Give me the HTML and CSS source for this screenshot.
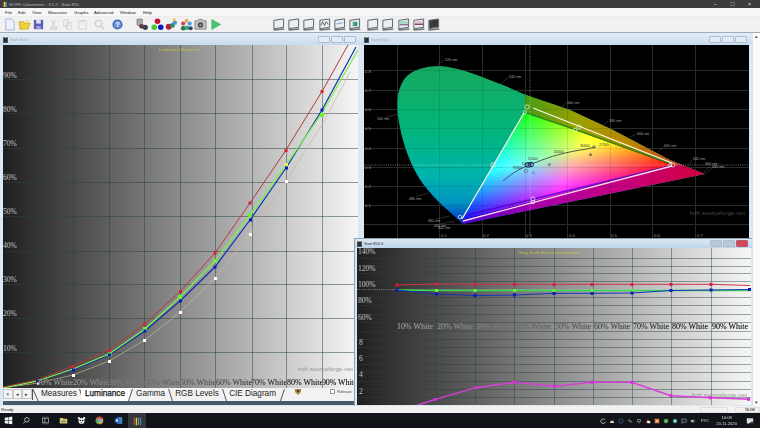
FILE: index.html
```html
<!DOCTYPE html>
<html lang="en">
<head>
<meta charset="utf-8">
<title>HCFR Colorimeter</title>
<link rel="stylesheet" href="styles.css">
</head>
<body>
<svg class="defs" width="0" height="0" aria-hidden="true">
  <defs>
    <linearGradient id="plotbg" x1="0" x2="1" y1="0" y2="0"><stop offset="0" stop-color="#1f1f1f"/><stop offset=".5" stop-color="#8c8c8c"/><stop offset="1" stop-color="#f6f6f6"/></linearGradient>
    <symbol id="mon" viewBox="0 0 14 14">
      <path d="M2 2.5 12.5 1v9L2 11.5z" fill="#e9eef2" stroke="#555b60" stroke-width="1"/>
      <path d="M1 12.2 13 11l.5 1.6-11.5 1z" fill="#70767c"/>
    </symbol>
  </defs>
</svg>
<div class="app">
  <header class="titlebar">
    <span class="appicon"></span>
    <span class="apptitle">HCFR Colorimeter - 3.5.2 - Sam 850</span>
    <span class="winctl"><span>&#8722;</span><span>&#9633;</span><span>&#215;</span></span>
  </header>
  <nav class="menubar">
    <span>File</span><span>Edit</span><span>View</span><span>Measures</span><span>Graphs</span><span>Advanced</span><span>Window</span><span>Help</span>
  </nav>
  <div class="toolbar">
    <div class="tgroup g1">
      <svg viewBox="0 0 14 14"><path d="M3 1h6l3 3v9H3z" fill="#eef3fb" stroke="#9fb4d6"/></svg>
      <svg viewBox="0 0 14 14"><path d="M1 4h5l1 1.500h6L11 12H2z" fill="#f2cf3c" stroke="#b99a20" stroke-width=".6"/><circle cx="10" cy="3.500" r="1.500" fill="#f6e58a"/></svg>
      <svg viewBox="0 0 14 14"><path d="M2 2h10v10H2z" fill="#5a5fb4"/><path d="M4.500 2h5v4h-5z" fill="#dfe2f5"/><path d="M4.500 8.500h5V12h-5z" fill="#9ea2dc"/></svg>
      <svg viewBox="0 0 14 14"><path d="M5 2l3 7M9 2 6 9" stroke="#c8c8c8" fill="none"/><circle cx="5" cy="11" r="1.500" fill="none" stroke="#c8c8c8"/><circle cx="9" cy="11" r="1.500" fill="none" stroke="#c8c8c8"/></svg>
      <svg viewBox="0 0 14 14"><path d="M3 2h5v7H3zM6 5h5v7H6z" fill="#f2f2f2" stroke="#d2d2d2"/></svg>
      <svg viewBox="0 0 14 14"><path d="M3 3h8v9H3z" fill="#f0f0f0" stroke="#d4d4d4"/><path d="M5 2h4v2H5z" fill="#d6d6d6"/></svg>
      <svg class="wide" viewBox="0 0 14 14"><circle cx="6" cy="6" r="3.500" fill="none" stroke="#cfcfcf" stroke-width="1.500"/><path d="M9 9l3 3" stroke="#cfcfcf" stroke-width="1.500"/></svg>
      <svg class="wide" viewBox="0 0 14 14"><circle cx="7" cy="7" r="5.500" fill="#4a72bf"/><circle cx="7" cy="7" r="3.600" fill="#6f95d8"/><text x="7" y="10" class="helpq">?</text></svg>
    </div>
    <div class="tgroup g2">
      <svg viewBox="0 0 14 14"><rect x="1" y="1" width="6" height="7" rx="1" fill="#a9a9a9" stroke="#666" stroke-width=".6"/><circle cx="6" cy="9" r="2.600" fill="#5b3a4a"/><circle cx="10" cy="10" r="2.800" fill="#3d3d58"/></svg>
      <svg viewBox="0 0 14 14"><circle cx="7" cy="3.500" r="3" fill="#c8102e"/><circle cx="3.500" cy="10" r="3" fill="#3ccf2e"/><circle cx="10.500" cy="10" r="3" fill="#0a18c0"/></svg>
      <svg viewBox="0 0 14 14"><circle cx="4" cy="9.500" r="3.200" fill="#b0203c"/><circle cx="8" cy="8" r="2.600" fill="#2c8f5c"/><circle cx="10.500" cy="5" r="2.400" fill="#4f8fe0"/><circle cx="10" cy="2" r="1.600" fill="#f0c040"/></svg>
      <svg viewBox="0 0 14 14"><circle cx="7" cy="3" r="2" fill="#f0a040"/><circle cx="3.500" cy="6" r="2.200" fill="#c84060"/><circle cx="10.500" cy="6" r="2.200" fill="#40a0e0"/><circle cx="3.500" cy="11" r="2.500" fill="#2f6f50"/><circle cx="7.500" cy="10.500" r="2.500" fill="#2fae6f"/><circle cx="11.500" cy="11" r="2.200" fill="#30406f"/></svg>
      <svg viewBox="0 0 14 14"><path d="M1 3h3l1-1.500h4L10 3h3v9H1z" fill="#c2c2c2" stroke="#666" stroke-width=".7"/><circle cx="7" cy="7.500" r="2.800" fill="#45454c"/><circle cx="7" cy="7.500" r="1.300" fill="#9a9aa4"/></svg>
      <svg viewBox="0 0 14 14"><path d="M3 1.500 12.500 7 3 12.500z" fill="#46c46e" stroke="#2d9f55" stroke-width=".5"/></svg>
    </div>
    <div class="tgroup g3">
      <svg><use href="#mon"/></svg>
      <svg><use href="#mon"/></svg>
      <svg><use href="#mon"/></svg>
      <svg viewBox="0 0 14 14"><use href="#mon" width="14" height="14"/><path d="M3 8 5 4l2 4 2-4 2 3" fill="none" stroke="#333" stroke-width=".8"/></svg>
      <svg viewBox="0 0 14 14"><use href="#mon" width="14" height="14"/><path d="M3.500 6.500 11 5" stroke="#9bb7d8" stroke-width="1.500"/></svg>
      <svg viewBox="0 0 14 14"><use href="#mon" width="14" height="14"/><path d="M5 4h5v5H5z" fill="#56b070"/><path d="M7 5h3v3H7z" fill="#4c78c8"/></svg>
      <svg><use href="#mon"/></svg>
      <svg><use href="#mon"/></svg>
      <svg viewBox="0 0 14 14"><use href="#mon" width="14" height="14"/><path d="M3 3h9v3.500H3z" fill="#a8dcc0"/><path d="M3 6.500h9v1.500H3z" fill="#8a6f92"/></svg>
      <svg viewBox="0 0 14 14"><use href="#mon" width="14" height="14"/><path d="M3 3h9v3H3z" fill="#e4c6d8"/><path d="M3 6h9v1.500H3z" fill="#80405f"/></svg>
      <svg viewBox="0 0 14 14"><use href="#mon" width="14" height="14"/><path d="M2.500 2.800 12 1.500v8L2.500 11z" fill="#3a3a3c"/></svg>
    </div>
  </div>

  <main class="mdi">
    <section class="win win1">
      <div class="wintitle">
        <span class="winicon"></span><span class="wintext">Sam 850:1</span>
        <span class="winbtns"><i></i><i></i><i></i></span>
      </div>
      <svg class="plot" viewBox="3 45 355 343">
        <rect x="3" y="45" width="355" height="343" fill="url(#plotbg)"/>
        <path class="grid" d="M37.500 45V388M73.500 45V388M109.500 45V388M144.500 45V388M180.500 45V388M215.500 45V388M252.500 45V388M286.500 45V388M322.500 45V388M3 79.500H358M3 113.500H358M3 148.500H358M3 182.500H358M3 216.500H358M3 251.500H358M3 284.500H358M3 318.500H358M3 352.500H358"/>
        <text class="title-y" x="179" y="51">Luminance Response</text>
        <g class="axis">
          <text x="3" y="78">90%</text><text x="3" y="112">80%</text><text x="3" y="146">70%</text><text x="3" y="180">60%</text><text x="3" y="214">50%</text><text x="3" y="248">40%</text><text x="3" y="282">30%</text><text x="3" y="316">20%</text><text x="3" y="351">10%</text>
        </g>
        <text class="wm" x="353" y="371" text-anchor="end">hcfr.sourceforge.net</text>
        <polyline class="ln-w" points="3,388 38,383 73,375 109,361 145,340 180,312 215,278 250,234 286,181 322,125 350,72"/>
        <polyline class="ln-b" points="3,388 37,381 73,370 109,355 145,331 180,301 215,267 250,220 286,168 322,110 356,47"/>
        <polyline class="ln-g" points="3,388 37,381 73,369 109,354 145,329 180,297 215,261 250,215 286,165 322,113 358,50"/>
        <polyline class="ln-r" points="3,387 37,380 73,366 109,350 145,324 180,291.500 215,253 250,203 286,150 322,91.500 348,45"/>
        <g class="pt-w"><rect x="37" y="382" width="3" height="3"/><rect x="72" y="374" width="3" height="3"/><rect x="108" y="360" width="3" height="3"/><rect x="143" y="339" width="3" height="3"/><rect x="179" y="311" width="3" height="3"/><rect x="214" y="277" width="3" height="3"/><rect x="249" y="233" width="3" height="3"/><rect x="285" y="180" width="3" height="3"/></g>
        <g class="pt-r"><rect x="71" y="365" width="3" height="3"/><rect x="108" y="349" width="3" height="3"/><rect x="143" y="322.500" width="3" height="3"/><rect x="179" y="290" width="3" height="3"/><rect x="213.500" y="251.500" width="3" height="3"/><rect x="248.500" y="201.500" width="3" height="3"/><rect x="284.500" y="149" width="3" height="3"/><rect x="320.500" y="90" width="3" height="3"/></g>
        <g class="pt-g"><rect x="107.500" y="352.500" width="4" height="4"/><rect x="143" y="327" width="4" height="4"/><rect x="178" y="295" width="4" height="4"/><rect x="213" y="259" width="4" height="4"/><rect x="248" y="213" width="4" height="4"/><rect x="320" y="113" width="4" height="4"/></g>
        <rect class="pt-y" x="284.500" y="163" width="3.500" height="3.500"/>
        <g class="pt-b"><rect x="36" y="379.500" width="3" height="3"/><rect x="72" y="368.500" width="3" height="3"/><rect x="108" y="353.500" width="3" height="3"/><rect x="143.500" y="329.500" width="3" height="3"/><rect x="179" y="299.500" width="3" height="3"/><rect x="213.500" y="265.500" width="3" height="3"/><rect x="249" y="218.500" width="3" height="3"/><rect x="285" y="166.500" width="3" height="3"/><rect x="320.500" y="108.500" width="3" height="3"/></g>
        <g class="xor">
          <text x="37" y="385">10% White</text><text x="73" y="385">20% White</text><text x="109" y="385">30% White</text><text x="145" y="385">40% White</text><text x="180" y="385">50% White</text><text x="216" y="385">60% White</text><text x="251" y="385">70% White</text><text x="287" y="385">80% White</text><text x="322" y="385" textLength="35">90% White</text>
        </g>
      </svg>
      <div class="tabstrip">
        <div class="tabnav"><span>&#215;</span><span>&#9666;</span><span>&#9656;</span></div>
        <div class="tab first slash-back">Measures</div>
        <div class="tab current slash-fwd">Luminance</div>
        <div class="tab gamma slash-back">Gamma</div>
        <div class="tab rgb slash-back">RGB Levels</div>
        <div class="tab cie slash-fwd">CIE Diagram</div>
        <svg class="tabbadge" viewBox="0 0 6 6"><path d="M0 0h6v3L3 6 0 3z" fill="#a5833a"/><path d="M2 1h2v2H2z" fill="#50401c"/></svg>
        <label class="release"><span class="check"></span>Release</label>
      </div>
      <div class="winstrip"></div>
    </section>

    <section class="win win2">
      <div class="wintitle">
        <span class="winicon"></span><span class="wintext">Sam 850:2</span>
        <span class="winbtns"><i></i><i></i><i></i></span>
      </div>
      <svg class="plot" viewBox="364 45 385 194">
        <defs>
          <clipPath id="shoe"><path d="M461 222C445 208 430 195 419 178 408 160 401 138 398 116 396 100 398 88 405 78 412 70 425 66 440 66 458 67 480 76 503 85L526 95 570 110 613 130 670 160 705 174 463 224Z"/></clipPath>
          <linearGradient id="leftfill" x1="0" x2="0" y1="66" y2="222" gradientUnits="userSpaceOnUse"><stop offset="0" stop-color="#18a860"/><stop offset=".35" stop-color="#04b474"/><stop offset=".55" stop-color="#00b490"/><stop offset=".7" stop-color="#00b4ac"/><stop offset=".87" stop-color="#0096c0"/><stop offset="1" stop-color="#0038cc"/></linearGradient>
          <linearGradient id="topfill" x1="520" x2="680" y1="0" y2="0" gradientUnits="userSpaceOnUse"><stop offset="0" stop-color="#3f9a18"/><stop offset=".35" stop-color="#98a000"/><stop offset=".7" stop-color="#bd8500"/><stop offset="1" stop-color="#c43a18"/></linearGradient>
          <linearGradient id="botfill" x1="463" x2="705" y1="0" y2="0" gradientUnits="userSpaceOnUse"><stop offset="0" stop-color="#4c00cc"/><stop offset=".3" stop-color="#a800aa"/><stop offset=".65" stop-color="#c60080"/><stop offset="1" stop-color="#cf003c"/></linearGradient>
          <linearGradient id="triG" x1="525" y1="112" x2="547.400" y2="197.600" gradientUnits="userSpaceOnUse"><stop offset="0" stop-color="#12ff12"/><stop offset=".56" stop-color="#12ff12"/><stop offset="1" stop-color="#000"/></linearGradient>
          <linearGradient id="triR" x1="672" y1="165" x2="539.200" y2="87.600" gradientUnits="userSpaceOnUse"><stop offset="0" stop-color="#ff1010"/><stop offset=".56" stop-color="#ff1010"/><stop offset="1" stop-color="#000"/></linearGradient>
          <linearGradient id="triB" x1="462" y1="220" x2="503.700" y2="104.300" gradientUnits="userSpaceOnUse"><stop offset="0" stop-color="#1010ff"/><stop offset=".56" stop-color="#1010ff"/><stop offset="1" stop-color="#000"/></linearGradient>
        </defs>
        <rect x="364" y="45" width="385" height="194" fill="#000"/>
        <path class="cgrid" d="M397.500 45V239M439.500 45V239M482.500 45V239M525.500 45V239M567.500 45V239M610.500 45V239M652.500 45V239M695.500 45V239M364 70.500H749M364 90.500H749M364 109.500H749M364 128.500H749M364 148.500H749M364 167.500H749M364 186.500H749M364 205.500H749M364 224.500H749"/>
        <g clip-path="url(#shoe)">
          <rect x="390" y="60" width="330" height="170" fill="url(#leftfill)"/>
          <polygon points="525,113 672,165 720,165 720,60 525,60" fill="url(#topfill)"/>
          <polygon points="463,218 672,165 720,165 720,240 463,240" fill="url(#botfill)"/>
        </g>
        <g class="blendgroup">
          <polygon points="525,112 672,165 462,220" fill="#000"/>
          <polygon class="screen" points="525,112 672,165 462,220" fill="url(#triG)"/>
          <polygon class="screen" points="525,112 672,165 462,220" fill="url(#triR)"/>
          <polygon class="screen" points="525,112 672,165 462,220" fill="url(#triB)"/>
        </g>
        <path class="cgrid-over" d="M397.500 45V235M439.500 45V235M482.500 45V235M525.500 45V235M567.500 45V235M610.500 45V235M652.500 45V235M695.500 45V235M364 70.500H749M364 90.500H749M364 109.500H749M364 128.500H749M364 148.500H749M364 167.500H749M364 186.500H749M364 205.500H749M364 224.500H749"/>
        <path class="band-g" d="M526 113 577 130 670 163"/>
        <path class="band-b" d="M467 215 670 166"/>
        <path class="ref-line" d="M533 108 672 163"/>
        <path class="ref-line pink" d="M463 221 672 166"/>
        <path class="ref-line" d="M462 219 524 113"/>
        <path class="cross" d="M530 45V235M364 165H749"/>
        <path class="locus" d="M503 181C512 173 524 166 537 162 549 157 565 152 587 149L595 147"/>
        <g class="ring">
          <circle cx="527" cy="107" r="2.200"/><circle cx="525" cy="112" r="1.500"/><circle cx="579" cy="127" r="2.200"/><circle cx="575" cy="130" r="1.800"/><circle cx="493" cy="165" r="2.300"/><circle cx="533" cy="199" r="2"/><circle cx="533" cy="202" r="1.800"/><circle cx="673" cy="165" r="2"/><circle cx="670" cy="165" r="1.500"/><circle cx="460" cy="217" r="1.800"/>
        </g>
        <g class="blob"><ellipse cx="528" cy="165" rx="3" ry="2.200"/><ellipse cx="531" cy="164.500" rx="2.600" ry="2.200"/></g>
        <circle class="cmark" cx="526" cy="171" r="1.800"/>
        <circle class="cmark" cx="594" cy="147" r="1.400"/>
        <g class="locus-t">
          <text x="528" y="160">5500</text><text x="554" y="153">4000</text><text x="580" y="147">3000</text><text x="599" y="146">2700</text><text x="513" y="169">9300</text><text x="522" y="165">D65</text><text x="589" y="156">A</text><text x="548" y="166">B</text><text x="532" y="174">C</text>
        </g>
        <path class="lead" d="M437 65 444 60M501 84 508 77M560 108 566 103M602 126 608 121M630 137 636 134M658 152 663 147M687 168 692 160M704 172 710 166M705 174 712 168M385 118 397 114M416 197 428 193M436 219 450 216M440 224 455 221"/>
        <g class="nm">
          <text x="445" y="60.500">520 nm</text><text x="509" y="78">540 nm</text><text x="567" y="103.500">560 nm</text><text x="609" y="121.500">580 nm</text><text x="637" y="134.500">600 nm</text><text x="664" y="146.500">620 nm</text><text x="693" y="159.500">640 nm</text><text x="705" y="165">660 nm</text><text x="712" y="167.500">680 nm</text><text x="377" y="120">500 nm</text><text x="409" y="199.500">480 nm</text><text x="428" y="221.500">460 nm</text><text x="434" y="226.500">440 nm</text><text x="438" y="229">420 nm</text>
        </g>
        <g class="tick">
          <text x="365" y="73">0.8</text><text x="365" y="92">0.7</text><text x="365" y="111">0.6</text><text x="365" y="130">0.5</text><text x="365" y="150">0.4</text><text x="365" y="169">0.3</text><text x="365" y="188">0.2</text><text x="365" y="207">0.1</text>
          <text x="441" y="237">0.1</text><text x="483" y="237">0.2</text><text x="526" y="237">0.3</text><text x="569" y="237">0.4</text><text x="611" y="237">0.5</text><text x="654" y="237">0.6</text><text x="697" y="237">0.7</text>
        </g>
        <text class="wm dark" x="745" y="215" text-anchor="end">hcfr.sourceforge.net</text>
      </svg>
    </section>

    <section class="win win3">
      <div class="wintitle active">
        <span class="winicon"></span><span class="wintext">Sam 850:3</span>
        <span class="winbtns"><i></i><i></i><i class="close"></i></span>
      </div>
      <svg class="plot" viewBox="356 248 394 157">
        <rect x="356" y="248" width="394" height="157" fill="url(#plotbg)"/>
        <path class="grid thin" d="M435.500 248V405M474.500 248V405M513.500 248V405M553.500 248V405M592.500 248V405M631.500 248V405M670.500 248V405M710.500 248V405M356 258.500H750M356 266.500H750M356 273.500H750M356 281.500H750M356 297.500H750M356 305.500H750M356 314.500H750M356 322.500H750M356 331.500H750M356 339.500H750M356 347.500H750M356 356.500H750M356 364.500H750M356 372.500H750M356 381.500H750M356 389.500H750M356 397.500H750"/>
        <text class="title-y" x="548" y="254">Gray Scale Balance/and gamma</text>
        <g class="axis">
          <text x="357" y="254">140%</text><text x="357" y="271">120%</text><text x="357" y="287">100%</text><text x="357" y="303">80%</text><text x="357" y="320">60%</text><text x="358" y="345">8</text><text x="358" y="361">6</text><text x="358" y="377">4</text><text x="358" y="394">2</text>
        </g>
        <text class="wm" x="746" y="397" text-anchor="end">hcfr.sourceforge.net</text>
        <path class="cross" d="M356 289.500H750"/>
        <polyline class="ln-r flat" points="396,285 435.500,284 474,284.300 513.500,284.300 553,284.300 591,284.300 631,284.300 670,284.300 710,284.300 749,285.500"/>
        <polyline class="ln-g flat" points="396,290 435.500,290.500 474,290.500 513.500,290.500 553,290.500 591,290.500 631,290.500 670,290.500 710,290.500 749,290.500"/>
        <polyline class="ln-b flat" points="396,290 435.500,294 474,295.500 513.500,295 553,293.300 591,293.300 631,293 670,290.500 710,290 749,289.500"/>
        <polyline class="ln-m" points="396,414 417,405 434.300,399.300 475,387.700 513.700,382.300 553.700,386.300 591,382.300 630.700,382.300 670,395.700 709.300,397.700 749,399.300"/>
        <g class="pt-r"><rect x="394.500" y="283.500" width="3" height="3"/><rect x="434" y="282.500" width="3" height="3"/><rect x="472.500" y="283" width="3" height="3"/><rect x="512" y="283" width="3" height="3"/><rect x="551.500" y="283" width="3" height="3"/><rect x="589.500" y="283" width="3" height="3"/><rect x="629.500" y="283" width="3" height="3"/><rect x="668.500" y="283" width="3" height="3"/><rect x="708.500" y="283" width="3" height="3"/></g>
        <g class="pt-g"><rect x="434" y="289" width="3" height="3"/><rect x="472.500" y="289" width="3" height="3"/><rect x="512" y="289" width="3" height="3"/><rect x="551.500" y="289" width="3" height="3"/><rect x="589.500" y="289" width="3" height="3"/><rect x="629.500" y="289" width="3" height="3"/></g>
        <g class="pt-b"><rect x="394.500" y="288.500" width="3" height="3"/><rect x="434" y="292.500" width="3" height="3"/><rect x="472.500" y="294" width="3" height="3"/><rect x="512" y="293.500" width="3" height="3"/><rect x="551.500" y="292" width="3" height="3"/><rect x="589.500" y="292" width="3" height="3"/><rect x="629.500" y="291.500" width="3" height="3"/><rect x="668.500" y="289" width="3" height="3"/><rect x="708.500" y="288.500" width="3" height="3"/><rect x="747" y="288" width="3" height="3"/></g>
        <g class="pt-m"><rect x="432.800" y="397.800" width="3" height="3"/><rect x="473.500" y="386.200" width="3" height="3"/><rect x="512.200" y="380.800" width="3" height="3"/><rect x="552.200" y="384.800" width="3" height="3"/><rect x="589.500" y="380.800" width="3" height="3"/><rect x="629.200" y="380.800" width="3" height="3"/><rect x="668.500" y="394.200" width="3" height="3"/><rect x="707.800" y="396.200" width="3" height="3"/><rect x="746" y="397.800" width="3" height="3"/></g>
        <g class="xor">
          <text x="396" y="329">10% White</text><text x="436" y="329">20% White</text><text x="475" y="329">30% White</text><text x="514" y="329">40% White</text><text x="554" y="329">50% White</text><text x="593" y="329">60% White</text><text x="632" y="329">70% White</text><text x="671" y="329">80% White</text><text x="711" y="329">90% White</text>
        </g>
      </svg>
    </section>

    <aside class="vscroll"><span>&#9652;</span><span>&#9662;</span></aside>
  </main>

  <div class="statusbar">
    <span class="ready">Ready</span>
    <span class="pane blank"></span>
    <span class="pane num">NUM</span>
  </div>

  <footer class="taskbar">
    <div class="taskleft">
      <svg class="ti" viewBox="0 0 12 12"><path d="M1 2.200 5.300 1.600v4H1zM6 1.500 11 .8v4.800H6zM1 6.300h4.300v4L1 9.700zM6 6.300h5V11l-5-.7z" fill="#f4f4f4"/></svg>
      <svg class="ti" viewBox="0 0 12 12"><circle cx="6.500" cy="5" r="3" fill="none" stroke="#ddd"/><path d="M4.300 7.300 1.800 10" stroke="#ddd"/></svg>
      <svg class="ti" viewBox="0 0 12 12"><path d="M2 3h8v6H2z" fill="none" stroke="#ddd" stroke-width=".8"/><path d="M5 3v6" stroke="#ddd" stroke-width=".8"/><path d="M1 1.500h10M1 10.500h10" stroke="#888" stroke-width=".6"/></svg>
      <svg class="ti" viewBox="0 0 12 12"><path d="M1 2.500h4l1 1h5V10H1z" fill="#e8c95c"/><path d="M3 6h6v2.500H3z" fill="#6e8ea8"/></svg>
      <svg class="ti" viewBox="0 0 12 12"><circle cx="6" cy="6.500" r="4" fill="#f2f2f2"/><circle cx="2.500" cy="2.800" r="1.600" fill="#f2f2f2"/><circle cx="9.500" cy="2.800" r="1.600" fill="#f2f2f2"/><circle cx="4.400" cy="6" r="1.100" fill="#111"/><circle cx="7.600" cy="6" r="1.100" fill="#111"/><path d="M5 9h2" stroke="#111"/></svg>
      <svg class="ti" viewBox="0 0 12 12"><circle cx="6" cy="6" r="5" fill="#d8a23a"/><path d="M6 6 1.500 3.500A5 5 0 0 1 10.500 3.500z" fill="#d0402f"/><path d="M6 6 1.500 3.500A5 5 0 0 0 6 11z" fill="#58a040"/><circle cx="6" cy="6" r="2.300" fill="#5a8fd8" stroke="#eee" stroke-width=".7"/></svg>
      <svg class="ti" viewBox="0 0 12 12"><path d="M4 1.500h7v9H4z" fill="#3f7fd0"/><path d="M1 3h6v6H1z" fill="#1f5fae"/><path d="M2.500 4.500h3v3h-3z" fill="#cfe0f5"/></svg>
      <span class="ti activeapp"><svg viewBox="0 0 12 12"><path d="M2 2h1.500v9H2z" fill="#d03a3a"/><path d="M4.500 2H6v9H4.500z" fill="#d8d040"/><path d="M7 2h1.500v9H7z" fill="#50b060"/><path d="M9.500 2H11v9H9.500z" fill="#5a70d0"/></svg></span>
    </div>
    <div class="tray">
      <svg viewBox="0 0 8 8"><path d="M6.500 2.500A3 3 0 1 0 7 5" fill="none" stroke="#ddd"/></svg>
      <svg viewBox="0 0 8 8"><path d="M1 6.500h6L5.500 3 4 4.500 3 3z" fill="#ddd"/></svg>
      <svg viewBox="0 0 8 8"><circle cx="4" cy="4" r="2.800" fill="none" stroke="#4a5ea8"/></svg>
      <svg viewBox="0 0 8 8"><path d="M1 3h4M3 5h4" stroke="#aaa"/></svg>
      <svg viewBox="0 0 8 8"><path d="M2 2h4v3H2zM4 5v2" fill="none" stroke="#999"/></svg>
      <svg viewBox="0 0 8 8"><path d="M1 6 4 1.500 7 6z" fill="#d85a30"/><path d="M3 4h4v3H3z" fill="#eee"/></svg>
      <svg viewBox="0 0 8 8"><path d="M1 1h6v6H1z" fill="#dd7a2a"/><path d="M2 2l4 4M6 2 2 6" stroke="#fff" stroke-width=".7"/></svg>
      <svg viewBox="0 0 8 8"><circle cx="4" cy="4" r="3" fill="#43a54a"/><path d="M2.500 4 3.700 5.200 5.600 2.800" fill="none" stroke="#fff" stroke-width=".7"/></svg>
      <svg viewBox="0 0 8 8"><circle cx="4" cy="4" r="3" fill="#46a09a"/><circle cx="4" cy="4" r="1.200" fill="#e0e0e0"/></svg>
      <svg viewBox="0 0 8 8"><path d="M1 1.500h6v4H3L1.500 7z" fill="none" stroke="#ccc" stroke-width=".7"/></svg>
      <svg viewBox="0 0 8 8"><path d="M1 3h1.500L4.500 1.500v5L2.500 5H1z" fill="#ccc"/><path d="M5.500 2.500a2 2 0 0 1 0 3" fill="none" stroke="#ccc" stroke-width=".6"/></svg>
      <span class="lang">РУС</span>
      <span class="clock"><span>10:08</span><span>20.11.2020</span></span>
      <svg class="notif" viewBox="0 0 10 10"><path d="M1 1.500h8v6H4L2 9.500v-2H1z" fill="#dcdcdc"/><circle cx="7.500" cy="7.500" r="2" fill="#333"/></svg>
    </div>
  </footer>
</div>
</body>
</html>
```
FILE: styles.css
```css
* { box-sizing: border-box; }
html, body { margin: 0; padding: 0; }
body { width: 760px; height: 428px; overflow: hidden; font-family: "Liberation Sans", Arial, sans-serif; background: #fff; }
.defs { position: absolute; }
.app { display: flex; flex-direction: column; width: 760px; height: 428px; overflow: hidden; filter: blur(.3px); }

.titlebar { flex: 0 0 8px; display: flex; align-items: center; background: #3d3d3d; color: #b9b9b9; font-size: 4.3px; padding-left: 3px; }
.appicon { width: 4px; height: 5px; margin-right: 2px; background: linear-gradient(90deg, #c04040 25%, #d8d040 25% 50%, #50b060 50% 75%, #5a70d0 75%); }
.apptitle { flex: 1; }
.winctl { display: flex; font-size: 6px; color: #ddd; }
.winctl span { width: 17px; text-align: center; line-height: 8px; }
.winctl span:last-child { margin-right: 2px; }

.menubar { flex: 0 0 9px; display: flex; align-items: center; background: #f7f7f7; font-size: 4.4px; color: #222; padding-left: 5px; border-bottom: 1px solid #ececec; }
.menubar span:nth-child(1) { width: 13px; }
.menubar span:nth-child(2) { width: 14px; }
.menubar span:nth-child(3) { width: 16px; }
.menubar span:nth-child(4) { width: 26px; }
.menubar span:nth-child(5) { width: 20px; }
.menubar span:nth-child(6) { width: 26px; }
.menubar span:nth-child(7) { width: 23px; }

.toolbar { flex: 0 0 16px; display: flex; align-items: center; background: #f1f1f1; border-bottom: 1px solid #9cadbd; padding-left: 3px; }
.tgroup { display: flex; align-items: center; }
.tgroup svg { width: 13px; height: 13px; display: block; flex: none; }
.g1 { gap: 1.500px; width: 133px; }
.g1 .wide { margin-left: 3px; }
.helpq { font-size: 8px; font-weight: 700; fill: #fff; text-anchor: middle; }
.g2 { gap: 1.600px; width: 136px; }
.g3 { gap: 2.200px; }
.g3 svg:nth-child(7) { margin-left: 3px; }

.mdi { flex: 1 1 auto; position: relative; background: #dfe6ee; overflow: hidden; }
.win { position: absolute; display: flex; flex-direction: column; background: #dbe7f3; overflow: hidden; }
.win1 { left: 0; top: 0; width: 361px; height: 373px; padding: 0 3px; }
.win2 { left: 360px; top: 0; width: 392px; height: 206px; padding: 0 3px 0 4px; }
.win3 { left: 354px; top: 205px; width: 398px; height: 168px; padding: 0 2px; border-top: 1px solid #8fa0b0; border-left: 1px solid #8fa0b0; }

.wintitle { flex: 0 0 12px; display: flex; align-items: center; background: linear-gradient(#e4edf7, #c9dbee); font-size: 4px; color: #9eabb8; margin: 0 -3px; padding: 1px 3px 0; }
.win3 .wintitle { margin: 0 -2px; padding: 0 2px; flex-basis: 9px; }
.wintitle.active { background: linear-gradient(#dce9f6, #bfd4ea); color: #1f2a36; }
.winicon { width: 5px; height: 6px; margin-right: 2px; background: #23303a; border: 1px solid #4a5a62; border-top-color: #9a9a60; }
.wintext { flex: 1; }
.winbtns { display: flex; gap: 1px; padding-right: 2px; }
.winbtns i { display: block; width: 12px; height: 6.500px; border: 1px solid #adbecf; background: #e3ecf5; border-radius: 1px; }
.win3 .winbtns i { background: #b9c9d9; }
.win3 .winbtns i.close { background: #d0485a; border-color: #b75c68; }

.plot { display: block; flex: none; }
.win1 .plot { width: 355px; height: 343px; }
.win2 .plot { width: 385px; height: 194px; }
.win3 .plot { width: 394px; height: 157px; }

.grid { stroke: rgba(38, 66, 66, .5); stroke-width: 1; fill: none; }
.grid.thin { stroke: rgba(38, 66, 66, .45); }
.title-y { font-size: 4.200px; fill: #c6c23c; text-anchor: middle; }
.axis text { font-family: "Liberation Serif", serif; font-size: 7.500px; fill: #c4c4c4; }
.wm { font-size: 5.800px; fill: #8f9090; letter-spacing: .2px; }
.wm.dark { fill: #4b4f4f; }
.xor text { font-family: "Liberation Serif", serif; font-size: 8px; fill: #e8e8e8; mix-blend-mode: difference; }

.ln-r, .ln-g, .ln-b, .ln-w, .ln-m { fill: none; }
.ln-r { stroke: #b23a3a; stroke-width: 1; }
.ln-g { stroke: #7cf04e; stroke-width: 1.300; }
.ln-b { stroke: #0f2fb0; stroke-width: 1.200; }
.ln-w { stroke: #c8b898; stroke-width: .7; }
.ln-r.flat { stroke: #d0343e; stroke-width: 1; }
.ln-g.flat { stroke: #38d84e; stroke-width: 1.400; }
.ln-b.flat { stroke: #1430b8; stroke-width: 1; }
.ln-m { stroke: #d83fd8; stroke-width: 1.400; }
.pt-r { fill: #d81f38; }
.pt-g { fill: #6cf03a; }
.pt-b { fill: #0a1cb8; }
.pt-w { fill: #fff; }
.pt-y { fill: #e8f060; }
.pt-m { fill: #e02ce0; }

.cgrid { stroke: #2c3232; stroke-width: 1; fill: none; }
.cgrid-over { stroke: rgba(0, 0, 0, .1); stroke-width: 1; fill: none; }
.blendgroup { isolation: isolate; }
.screen { mix-blend-mode: screen; }
.band-g { fill: none; stroke: #1d8e14; stroke-width: 1.800; opacity: .75; }
.band-b { fill: none; stroke: #4a00c0; stroke-width: 1.800; opacity: .75; }
.ref-line { fill: none; stroke: #fbfbe8; stroke-width: 1.300; }
.ref-line.pink { stroke: #ffd8f6; }
.cross { fill: none; stroke: rgba(235, 235, 235, .65); stroke-width: .7; stroke-dasharray: 1 1.200; }
.locus { fill: none; stroke: #444; stroke-width: .9; }
.ring circle { fill: none; stroke: #e8f5e8; stroke-width: .7; }
.blob ellipse { fill: none; stroke: #101860; stroke-width: 1; }
.cmark { fill: none; stroke: #555; stroke-width: .6; }
.locus-t text { font-size: 4.300px; fill: #333; }
.lead { fill: none; stroke: #6a6a6a; stroke-width: .4; }
.nm text { font-size: 3.700px; fill: #a0a0a0; }
.tick text { font-size: 4.200px; fill: #9a9a9a; }

.tabstrip { flex: 0 0 13px; display: flex; align-items: center; background: #f2f2f2; font-size: 8.200px; color: #222; width: 355px; }
.tabnav { display: flex; width: 30px; height: 11px; flex: none; border-right: 1px solid #555; }
.tabnav span { width: 9.500px; height: 10px; font-size: 5px; line-height: 9px; text-align: center; border: 1px solid #c8c8c8; background: #f4f4f4; color: #333; }
.tab { position: relative; height: 13px; line-height: 12px; padding: 0 5px; flex: none; }
.tab.first { margin-left: 8px; padding: 0 4px 0 0; }
.tab.current { background: #fff; -webkit-text-stroke: .25px #111; color: #111; padding: 0 5px 0 4px; }
.tab.gamma { padding-left: 6px; }
.tab.cie { padding: 0 6px 0 5.300px; }
.tab::after { content: ""; position: absolute; top: 1px; bottom: 0; right: -1px; width: 1px; background: #555; }
.slash-back::after { transform: skewX(18deg); }
.slash-fwd::after { transform: skewX(-18deg); }
.tab.first::before { content: ""; position: absolute; top: 1px; bottom: 0; left: -6px; width: 1px; background: #555; transform: skewX(24deg); }
.tabbadge { width: 6px; height: 6px; flex: none; margin: -6px 0 0 13px; }
.release { display: flex; align-items: center; gap: 1px; font-size: 4px; color: #444; margin-left: 29px; margin-top: -6px; flex: none; }
.check { width: 5px; height: 5px; border: 1px solid #999; background: #fff; display: block; margin-right: 1px; }
.winstrip { flex: 0 0 4px; background: #48596c; width: 355px; }

.vscroll { position: absolute; right: 0; top: 0; bottom: 0; width: 8px; background: #fbfbfb; display: flex; flex-direction: column; justify-content: space-between; align-items: center; font-size: 5px; color: #444; line-height: 7px; border-left: 1px solid #e0e4e8; }

.statusbar { flex: 0 0 7px; display: flex; align-items: center; background: #f2f2f2; font-size: 4.300px; color: #222; padding-left: 1px; }
.ready { flex: 1; }
.pane { height: 6px; border: 1px solid #dedede; display: block; line-height: 4px; }
.pane.blank { width: 28px; margin-right: 7px; }
.pane.num { width: 25px; padding-left: 9px; font-size: 4.300px; }

.taskbar { flex: 0 0 15px; display: flex; justify-content: space-between; align-items: center; background: #11151a; color: #d8d8d8; }
.taskleft { display: flex; align-items: center; height: 15px; padding-left: 4px; }
.ti { width: 9px; height: 9px; display: block; margin-right: 9.300px; flex: none; }
.activeapp { height: 15px; width: 18px; margin: 0 0 0 -4px; background: #33373c; display: flex; align-items: center; justify-content: center; }
.activeapp svg { width: 10px; height: 10px; }
.tray { display: flex; align-items: center; gap: 3px; padding-right: 6px; }
.tray svg { width: 6px; height: 6px; display: block; flex: none; }
.lang { font-size: 4.300px; margin: 0 4px 0 2px; }
.clock { display: flex; flex-direction: column; align-items: center; font-size: 4.200px; line-height: 6px; margin-right: 6px; }
.tray .notif { width: 8px; height: 8px; }
```
